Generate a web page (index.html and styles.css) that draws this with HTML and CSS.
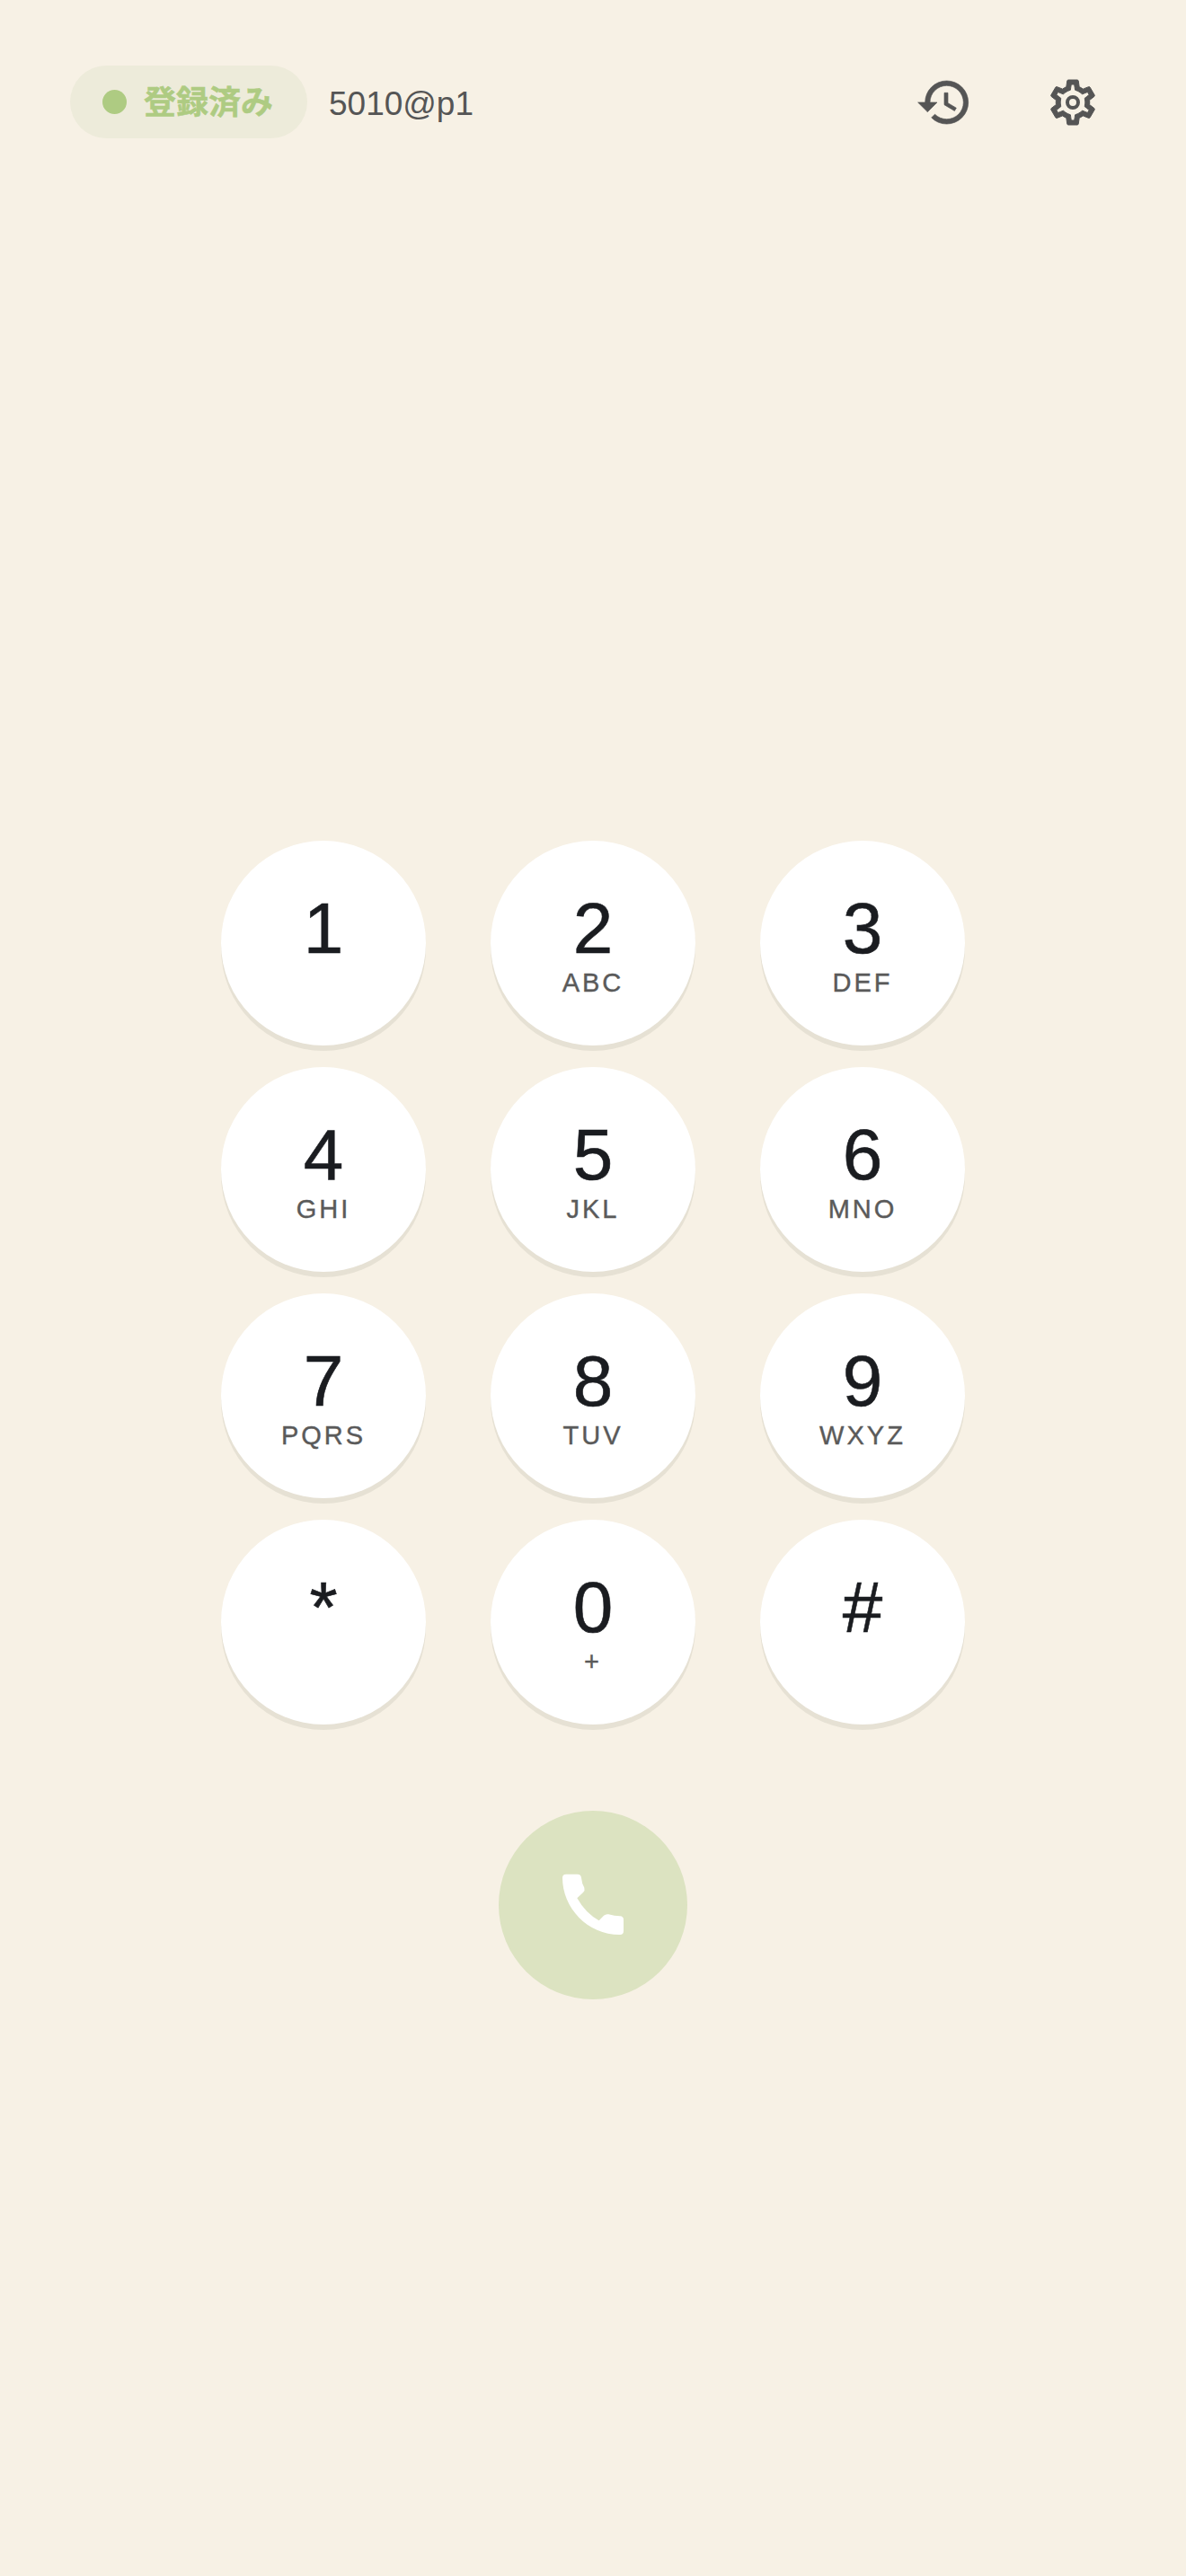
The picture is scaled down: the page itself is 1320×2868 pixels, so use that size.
FILE: index.html
```html
<!DOCTYPE html>
<html lang="ja">
<head>
<meta charset="utf-8">
<title>Dialer</title>
<link rel="stylesheet" href="styles.css">
</head>
<body>
<div class="app">
  <header class="topbar">
    <div class="status">
      <div class="pill"><span class="dot"></span><span class="pill-text">登録済み</span></div>
      <span class="account">5010@p1</span>
    </div>
    <div class="actions">
      <button class="icon-btn icon-history" aria-label="history"><svg viewBox="0 0 24 24"><path d="M13 3a9 9 0 0 0-9 9H1l3.89 3.89.07.14L9 12H6c0-3.87 3.13-7 7-7s7 3.13 7 7-3.13 7-7 7c-1.93 0-3.68-.79-4.94-2.06l-1.42 1.42A8.954 8.954 0 0 0 13 21a9 9 0 0 0 0-18zm-1 5v5l4.28 2.54.72-1.21-3.5-2.08V8H12z"/></svg></button>
      <button class="icon-btn icon-settings" aria-label="settings"><svg viewBox="0 0 24 24"><path d="M19.43 12.98c.04-.32.07-.64.07-.98 0-.34-.03-.66-.07-.98l2.11-1.65c.19-.15.24-.42.12-.64l-2-3.46c-.09-.16-.26-.25-.44-.25-.06 0-.12.01-.17.03l-2.49 1c-.52-.4-1.08-.73-1.69-.98l-.38-2.65C14.46 2.18 14.25 2 14 2h-4c-.25 0-.46.18-.49.42l-.38 2.65c-.61.25-1.17.59-1.69.98l-2.49-1c-.06-.02-.12-.03-.18-.03-.17 0-.34.09-.43.25l-2 3.46c-.13.22-.07.49.12.64l2.11 1.65c-.04.32-.07.65-.07.98 0 .33.03.66.07.98l-2.11 1.65c-.19.15-.24.42-.12.64l2 3.46c.09.16.26.25.44.25.06 0 .12-.01.17-.03l2.49-1c.52.4 1.08.73 1.69.98l.38 2.65c.03.24.24.42.49.42h4c.25 0 .46-.18.49-.42l.38-2.65c.61-.25 1.17-.59 1.69-.98l2.49 1c.06.02.12.03.18.03.17 0 .34-.09.43-.25l2-3.46c.12-.22.07-.49-.12-.64l-2.11-1.65zm-1.98-1.71c.04.31.05.52.05.73 0 .21-.02.43-.05.73l-.14 1.13.89.7 1.08.84-.7 1.21-1.27-.51-1.04-.42-.9.68c-.43.32-.84.56-1.25.73l-1.06.43-.16 1.13-.2 1.35h-1.4l-.19-1.35-.16-1.13-1.06-.43c-.43-.18-.83-.41-1.23-.71l-.91-.7-1.06.43-1.27.51-.7-1.21 1.08-.84.89-.7-.14-1.13c-.03-.31-.05-.54-.05-.74s.02-.43.05-.73l.14-1.13-.89-.7-1.08-.84.7-1.21 1.27.51 1.04.42.9-.68c.43-.32.84-.56 1.25-.73l1.06-.43.16-1.13.2-1.35h1.39l.19 1.35.16 1.13 1.06.43c.43.18.83.41 1.23.71l.91.7 1.06-.43 1.27-.51.7 1.21-1.07.85-.89.7.14 1.13z"/><circle class="gear-ring" cx="12" cy="12" r="2.4"/></svg></button>
    </div>
  </header>
  <main class="dialer">
    <div class="keypad">
      <button class="key"><span class="digit">1</span><span class="letters"></span></button>
      <button class="key"><span class="digit">2</span><span class="letters">ABC</span></button>
      <button class="key"><span class="digit">3</span><span class="letters">DEF</span></button>
      <button class="key"><span class="digit">4</span><span class="letters">GHI</span></button>
      <button class="key"><span class="digit">5</span><span class="letters">JKL</span></button>
      <button class="key"><span class="digit">6</span><span class="letters">MNO</span></button>
      <button class="key"><span class="digit">7</span><span class="letters">PQRS</span></button>
      <button class="key"><span class="digit">8</span><span class="letters">TUV</span></button>
      <button class="key"><span class="digit">9</span><span class="letters">WXYZ</span></button>
      <button class="key"><span class="digit">*</span><span class="letters"></span></button>
      <button class="key"><span class="digit">0</span><span class="letters">+</span></button>
      <button class="key"><span class="digit">#</span><span class="letters"></span></button>
    </div>
    <button class="call" aria-label="call"><svg viewBox="0 3 240 240"><path d="M30 20H68Q80 20 81 32Q83 52 91 65Q94 74 87 81L67 100Q95 150 140 175L156 158Q163 152 172 154Q192 160 210 160Q222 161 222 172V210Q222 222 210 222C100 222 18 130 18 32Q18 20 30 20Z"/></svg></button>
  </main>
</div>
</body>
</html>
```

FILE: styles.css
```css
* { box-sizing: border-box; }
html, body { margin: 0; padding: 0; }
body {
  background: #f7f1e5;
  font-family: "Liberation Sans", "Noto Sans CJK JP", sans-serif;
  color: #1a1c20;
}
.app { width: 1320px; min-height: 2868px; display: flex; flex-direction: column; }
.topbar {
  display: flex;
  justify-content: space-between;
  align-items: center;
  padding: 73px 96px 0 78px;
}
.status { display: flex; align-items: center; gap: 24px; }
.pill {
  display: flex;
  align-items: center;
  gap: 19px;
  height: 81px;
  width: 264px;
  padding: 0 36px;
  border-radius: 41px;
  background: #edebda;
}
.dot { width: 27px; height: 27px; border-radius: 50%; background: #aecb82; flex: none; }
.pill-text {
  font-size: 36px;
  line-height: 36px;
  font-weight: 700;
  color: #aecb82;
  white-space: nowrap;
  padding-top: 2px;
  -webkit-text-stroke: 0.5px #aecb82;
}
.account { font-size: 37px; color: #555555; padding-top: 4px; }
.actions { display: flex; align-items: center; gap: 81px; padding-top: 1px; }
.icon-btn { padding: 0; border: 0; background: none; display: block; }
.icon-btn svg { display: block; fill: #555555; overflow: visible; }
.icon-history svg { width: 64px; height: 64px; stroke: #555555; stroke-width: 0.25; }
.icon-settings svg { width: 60px; height: 60px; stroke: #555555; stroke-width: 0.4; }
.icon-settings .gear-ring { fill: none; stroke-width: 1.6; }
.dialer { display: flex; flex-direction: column; align-items: center; padding-top: 782px; }
.keypad {
  display: grid;
  grid-template-columns: repeat(3, 228px);
  grid-auto-rows: 228px;
  column-gap: 72px;
  row-gap: 24px;
}
.key {
  display: flex;
  flex-direction: column;
  align-items: center;
  justify-content: center;
  padding: 0;
  border: 0;
  border-radius: 50%;
  background: #ffffff;
  box-shadow: 0 6px 0 #e6e1d4;
  font-family: inherit;
}
.digit {
  font-size: 80px;
  line-height: 88px;
  color: #1a1c20;
  -webkit-text-stroke: 0.6px #1a1c20;
}
.letters {
  height: 32px;
  font-size: 29px;
  line-height: 32px;
  letter-spacing: 3px;
  color: #5a5a5a;
  -webkit-text-stroke: 0.4px #5a5a5a;
}
.call {
  width: 210px; height: 210px; margin-top: 96px; padding: 0; border: 0; border-radius: 50%;
  background: #dce3c1;
  display: flex; align-items: center; justify-content: center;
}
.call svg { display: block; width: 80px; height: 80px; fill: #ffffff; }
```
